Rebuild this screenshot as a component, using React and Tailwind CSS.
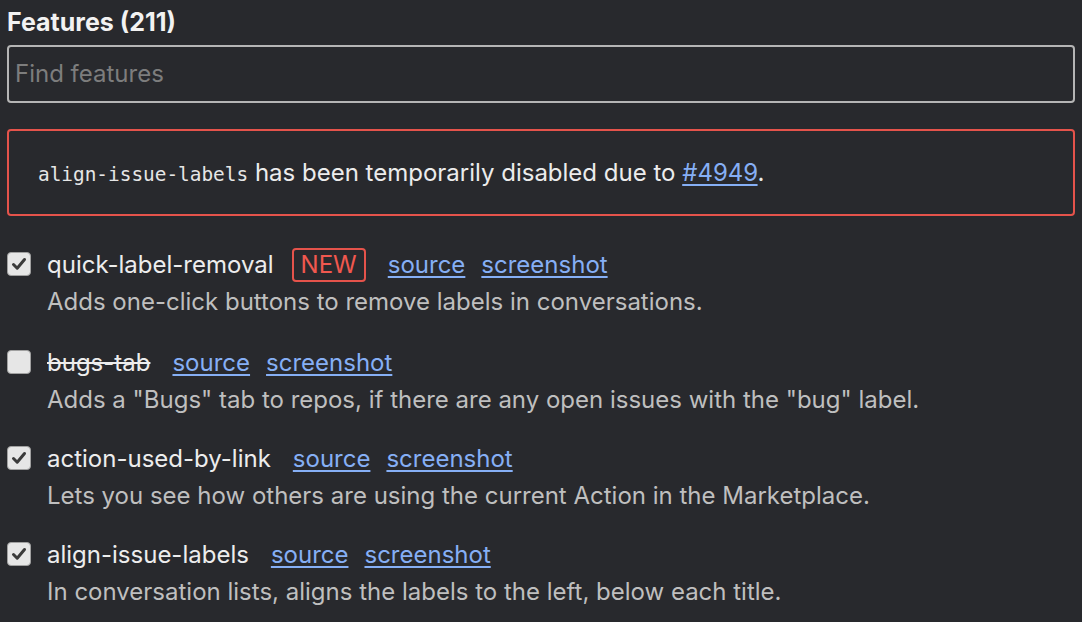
import React from "react";

const features = [
  { name: "quick-label-removal", isNew: true, checked: true, desc: "Adds one-click buttons to remove labels in conversations." },
  { name: "bugs-tab", checked: false, disabled: true, desc: 'Adds a "Bugs" tab to repos, if there are any open issues with the "bug" label.' },
  { name: "action-used-by-link", checked: true, desc: "Lets you see how others are using the current Action in the Marketplace." },
  { name: "align-issue-labels", checked: true, desc: "In conversation lists, aligns the labels to the left, below each title." },
];

function Check({ checked }) {
  return (
    <div className="w-[24px] h-[24px] shrink-0 rounded-[4px] bg-[#e6e6e6] border border-[#a0a0a0] flex items-center justify-center">
      {checked && (
        <svg width="16" height="16" viewBox="0 0 16 16">
          <path d="M2.5 8.5 L6.2 12.2 L13.5 3.5" fill="none" stroke="#3a3a3a" strokeWidth="3" strokeLinecap="round" strokeLinejoin="round" />
        </svg>
      )}
    </div>
  );
}

export default function App() {
  return (
    <div className="w-[1082px] h-[622px] overflow-hidden bg-[#28292d] text-[#ececec] px-[7px] pt-[6px]" style={{ fontFamily: "Inter, 'Noto Sans', sans-serif" }}>
      <h1 className="text-[25px] font-bold leading-[32px] text-[#f2f2f2]">Features (211)</h1>
      <div className="mt-[7px] h-[58px] border-2 border-[#b5b5b5] rounded-[4px] flex items-center px-[6px]">
        <span className="text-[24px] text-[#7d7d7d]">Find features</span>
      </div>
      <div className="mt-[26px] h-[87px] border-2 border-[#e5534b] rounded-[4px] flex items-center pl-[29px]">
        <span className="text-[24px] text-[#ececec]">
          <code className="text-[19.4px] text-[#e6e6e6]" style={{ fontFamily: "'DejaVu Sans Mono', monospace" }}>align-issue-labels</code>{" "}
          has been temporarily disabled due to{" "}
          <span className="text-[#86aff5] underline underline-offset-[3px]">#4949</span>.
        </span>
      </div>
      <div className="mt-[32px] flex flex-col gap-[22px]">
        {features.map((f) => (
          <div key={f.name} className={"flex gap-[16px] " + (f.isNew ? "pb-[2px]" : "")}>
            <div className="pt-[4px]">
              <Check checked={f.checked} />
            </div>
            <div className="flex flex-col">
              <div className="flex items-center h-[33px]">
                <span className={"text-[24px] text-[#ededed] " + (f.disabled ? "line-through" : "")}>{f.name}</span>
                {f.isNew && (
                  <span className="ml-[18px] h-[34px] px-[7px] border-2 border-[#e5534b] rounded-[4px] text-[24px] text-[#f0584f] flex items-center">NEW</span>
                )}
                <span className={"text-[24px] text-[#86aff5] underline underline-offset-[3px] " + (f.isNew ? "ml-[22px]" : "ml-[22px]")}>source</span>
                <span className="ml-[16px] text-[24px] text-[#86aff5] underline underline-offset-[3px]">screenshot</span>
              </div>
              <div className="text-[24px] text-[#bfbfbf] leading-[41px]">{f.desc}</div>
            </div>
          </div>
        ))}
      </div>
    </div>
  );
}
